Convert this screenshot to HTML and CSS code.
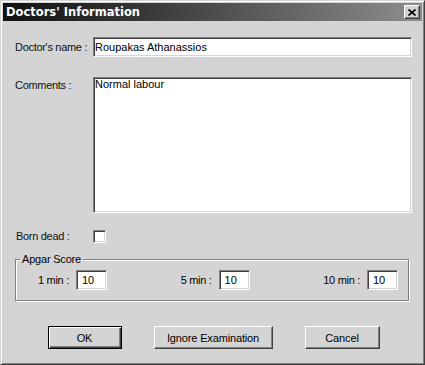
FILE: index.html
```html
<!DOCTYPE html>
<html lang="en">
<head>
  <meta charset="UTF-8" />
  <title>Doctors' Information</title>
  <link rel="stylesheet" href="styles.css">
</head>
<body>
  <div class="dialog">
    <div class="titlebar">
      <span class="title">Doctors' Information</span>
      <button class="close-btn">
        <svg width="8" height="7" viewBox="0 0 8 7"><path d="M0.5 0.5l7 6M7.5 0.5l-7 6" stroke="#000" stroke-width="1.6" fill="none"/></svg>
      </button>
    </div>

    <div class="content">
      <!-- doctor fields -->
      <div class="row">
        <label class="lbl">Doctor's name :</label>
        <input type="text" class="field name-field" value="Roupakas Athanassios" />
      </div>
      <div class="row row-top comments-row">
        <label class="lbl">Comments :</label>
        <textarea class="field comments-field">Normal labour</textarea>
      </div>
      <div class="row born-row">
        <label class="lbl">Born dead :</label>
        <input type="checkbox" class="check" />
      </div>

      <!-- apgar group -->
      <div class="group">
        <span class="legend">Apgar Score</span>
        <div class="score"><span>1 min :</span><input type="text" class="field small-field" value="10" /></div>
        <div class="score"><span>5 min :</span><input type="text" class="field small-field" value="10" /></div>
        <div class="score"><span>10 min :</span><input type="text" class="field small-field" value="10" /></div>
      </div>

      <div class="buttons">
        <button class="btn btn-default ok-btn">OK</button>
        <button class="btn ignore-btn">Ignore Examination</button>
        <button class="btn cancel-btn">Cancel</button>
      </div>
    </div>
  </div>
</body>
</html>
```

FILE: styles.css
```css
body {
  margin: 0;
  padding: 0;
  background-color: #d4d4d4;
  font-family: "Liberation Sans", Arial, sans-serif;
  font-size: 11px;
  color: #000;
}

.dialog {
  width: 425px;
  height: 365px;
  box-sizing: border-box;
  background-color: #d4d4d4;
  border: 1px solid;
  border-color: #d4d4d4 #404040 #404040 #d4d4d4;
  box-shadow: inset 1px 1px #fff, inset -1px -1px #808080;
  padding: 2px;
}

.titlebar {
  height: 18px;
  display: flex;
  align-items: center;
  justify-content: space-between;
  padding: 0 2px 0 3px;
  background: linear-gradient(to right, #111, #333 30%, #8e8e8e);
}

.title {
  color: #fff;
  font-family: "DejaVu Sans", Verdana, sans-serif;
  font-weight: bold;
  font-size: 11.5px;
}

.close-btn {
  width: 16px;
  height: 14px;
  padding: 0;
  display: flex;
  align-items: center;
  justify-content: center;
  background-color: #d4d4d4;
  border: 1px solid;
  border-color: #fff #404040 #404040 #fff;
  box-shadow: inset -1px -1px #808080;
}

.content {
  padding: 16px 10px 0 12px;
}

.row {
  display: flex;
  align-items: center;
}

.row-top {
  align-items: flex-start;
}

.lbl {
  width: 78px;
  flex-shrink: 0;
  line-height: 13px;
  letter-spacing: -0.3px;
  color: #111;
}

.row-top .lbl {
  padding-top: 2px;
}

.comments-row {
  margin-top: 20px;
}

.born-row {
  margin-top: 17px;
}

.born-row .lbl {
  padding-left: 1px;
  width: 77px;
}

.field {
  box-sizing: border-box;
  margin: 0;
  background-color: #fff;
  font-family: "Liberation Sans", Arial, sans-serif;
  font-size: 11px;
  color: #000;
  border: 1px solid;
  border-color: #808080 #fff #fff #808080;
  box-shadow: inset 1px 1px #404040, inset -1px -1px #d4d4d4;
  outline: none;
}

.name-field {
  width: 319px;
  height: 20px;
  padding: 0 1px;
}

.comments-field {
  width: 319px;
  height: 136px;
  padding: 0 1px;
  resize: none;
  line-height: 13px;
}

.check {
  appearance: none;
  margin: 0;
  width: 13px;
  height: 13px;
  background-color: #fff;
  border: 1px solid;
  border-color: #808080 #fff #fff #808080;
  box-shadow: inset 1px 1px #404040, inset -1px -1px #d4d4d4;
}

.group {
  position: relative;
  margin-top: 16px;
  width: 394px;
  box-sizing: border-box;
  border: 1px solid #808080;
  box-shadow: inset 1px 1px #fff, 1px 1px #fff;
  padding: 10px 10px 10px 22px;
  display: flex;
  justify-content: space-between;
  align-items: center;
}

.legend {
  position: absolute;
  left: 4px;
  top: -7px;
  padding: 0 2px;
  line-height: 13px;
  letter-spacing: -0.2px;
  background-color: #d4d4d4;
}

.score {
  display: flex;
  align-items: center;
  gap: 7px;
  letter-spacing: -0.3px;
}

.small-field {
  width: 31px;
  height: 20px;
  padding: 0 5px;
}

.buttons {
  margin-top: 25px;
  display: flex;
  justify-content: center;
  gap: 32px;
}

.btn {
  height: 23px;
  padding: 0;
  background-color: #d4d4d4;
  font-family: "Liberation Sans", Arial, sans-serif;
  font-size: 11px;
  letter-spacing: -0.15px;
  color: #000;
  border: 1px solid;
  border-color: #fff #404040 #404040 #fff;
  box-shadow: inset -1px -1px #808080;
}

.btn-default {
  border: 1px solid #000;
  box-shadow: inset 1px 1px #fff, inset -1px -1px #404040, inset -2px -2px #808080;
}

.ok-btn {
  width: 74px;
}

.ignore-btn {
  width: 119px;
}

.cancel-btn {
  width: 75px;
}
```
